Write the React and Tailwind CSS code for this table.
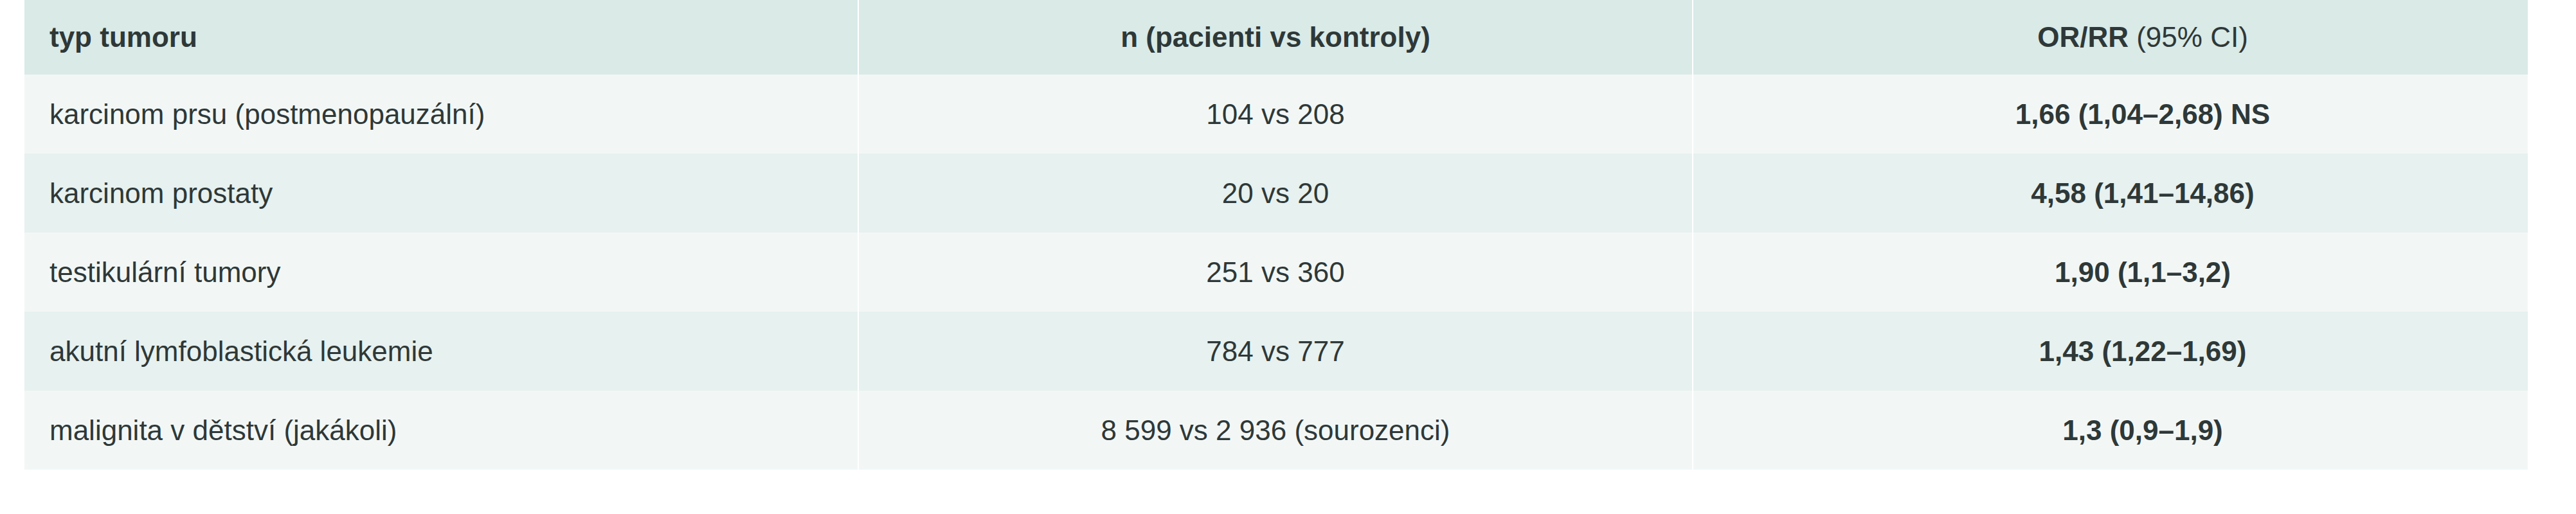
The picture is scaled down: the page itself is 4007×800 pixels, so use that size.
import React from 'react';

const rows = [
  { type: 'karcinom prsu (postmenopauzální)', n: '104 vs 208', or: '1,66 (1,04–2,68) NS' },
  { type: 'karcinom prostaty', n: '20 vs 20', or: '4,58 (1,41–14,86)' },
  { type: 'testikulární tumory', n: '251 vs 360', or: '1,90 (1,1–3,2)' },
  { type: 'akutní lymfoblastická leukemie', n: '784 vs 777', or: '1,43 (1,22–1,69)' },
  { type: 'malignita v dětství (jakákoli)', n: '8 599 vs 2 936 (sourozenci)', or: '1,3 (0,9–1,9)' },
];

const App = () => {
  return (
    <div className="bg-white w-[4007px] h-[800px] font-['Liberation_Sans',Arial,sans-serif] text-[#2e3838] text-[44px]">
      <div className="ml-[38px] w-[3894px]">
        {/* header */}
        <div className="grid grid-cols-[1298px_1298px_1298px] h-[116px] bg-[#d9eae7]">
          <div className="flex items-center pl-[39px] border-r-2 border-white font-semibold">typ tumoru</div>
          <div className="flex items-center justify-center border-r-2 border-white font-semibold">n (pacienti vs kontroly)</div>
          <div className="flex items-center justify-center pl-[100px]">
            <span className="font-bold">OR/RR</span>&nbsp;(95% CI)
          </div>
        </div>

        {rows.map((row, i) => (
          <div
            key={row.type}
            className={`grid grid-cols-[1298px_1298px_1298px] h-[123px] ${i % 2 === 0 ? 'bg-[#f2f7f6]' : 'bg-[#e7f1ef]'}`}
          >
            <div className="flex items-center pl-[39px] border-r-2 border-white">{row.type}</div>
            <div className="flex items-center justify-center border-r-2 border-white">{row.n}</div>
            <div className="flex items-center justify-center pl-[100px] font-bold">{row.or}</div>
          </div>
        ))}
      </div>
    </div>
  );
};

export default App;
